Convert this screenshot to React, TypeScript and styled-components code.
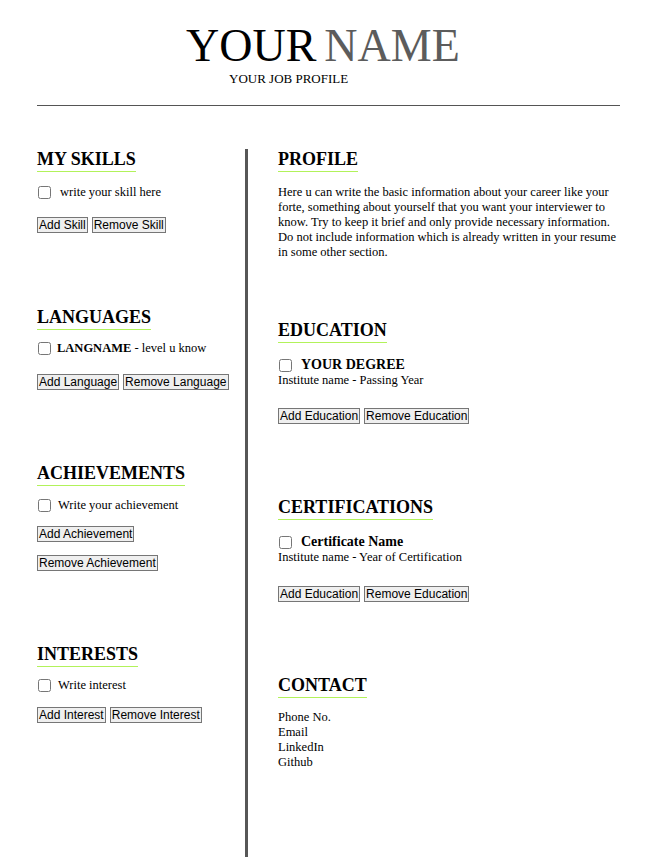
import styled, { createGlobalStyle } from 'styled-components';

const GlobalStyle = createGlobalStyle`
  html, body {
    margin: 0;
    padding: 0;
    background: #ffffff;
  }
  body {
    font-family: "Liberation Serif", "Times New Roman", serif;
    color: #000;
  }
`;

function App() {
  return (
    <>
      <GlobalStyle />
      <Page>
        <Header>
          <NameBlock>
            <Name>
              YOUR<NameGrey>NAME</NameGrey>
            </Name>
            <JobProfile>YOUR JOB PROFILE</JobProfile>
          </NameBlock>
        </Header>
        <Rule />

        <Columns>
          <LeftColumn>
            <Section $mt={0}>
              <Heading>MY SKILLS</Heading>
              <CheckRow $mt={13} $gap={9}>
                <Check type="checkbox" />
                <span>write your skill here</span>
              </CheckRow>
              <ButtonRow $mt={17}>
                <Button>Add Skill</Button>
                <Button>Remove Skill</Button>
              </ButtonRow>
            </Section>

            <Section $mt={74}>
              <Heading>LANGUAGES</Heading>
              <CheckRow $mt={11} $gap={6}>
                <Check type="checkbox" />
                <span>
                  <b>LANGNAME</b> - level u know
                </span>
              </CheckRow>
              <ButtonRow $mt={18}>
                <Button>Add Language</Button>
                <Button>Remove Language</Button>
              </ButtonRow>
            </Section>

            <Section $mt={73}>
              <Heading>ACHIEVEMENTS</Heading>
              <CheckRow $mt={12} $gap={7}>
                <Check type="checkbox" />
                <span>Write your achievement</span>
              </CheckRow>
              <ButtonRow $mt={13}>
                <Button>Add Achievement</Button>
                <Button>Remove Achievement</Button>
              </ButtonRow>
            </Section>

            <Section $mt={73}>
              <Heading>INTERESTS</Heading>
              <CheckRow $mt={11} $gap={7}>
                <Check type="checkbox" />
                <span>Write interest</span>
              </CheckRow>
              <ButtonRow $mt={14}>
                <Button>Add Interest</Button>
                <Button>Remove Interest</Button>
              </ButtonRow>
            </Section>
          </LeftColumn>

          <RightColumn>
            <Section $mt={0}>
              <Heading>PROFILE</Heading>
              <Paragraph>
                Here u can write the basic information about your career like your forte,
                something about yourself that you want your interviewer to know. Try to keep
                it brief and only provide necessary information. Do not include information
                which is already written in your resume in some other section.
              </Paragraph>
            </Section>

            <Section $mt={60}>
              <Heading>EDUCATION</Heading>
              <ItemTitle $mt={14}>
                <Check type="checkbox" />
                <span>YOUR DEGREE</span>
              </ItemTitle>
              <TextLine>Institute name - Passing Year</TextLine>
              <ButtonRow $mt={20}>
                <Button>Add Education</Button>
                <Button>Remove Education</Button>
              </ButtonRow>
            </Section>

            <Section $mt={73}>
              <Heading>CERTIFICATIONS</Heading>
              <ItemTitle $mt={14}>
                <Check type="checkbox" />
                <span>Certificate Name</span>
              </ItemTitle>
              <TextLine>Institute name - Year of Certification</TextLine>
              <ButtonRow $mt={21}>
                <Button>Add Education</Button>
                <Button>Remove Education</Button>
              </ButtonRow>
            </Section>

            <Section $mt={73}>
              <Heading>CONTACT</Heading>
              <ContactList>
                <TextLine>Phone No.</TextLine>
                <TextLine>Email</TextLine>
                <TextLine>LinkedIn</TextLine>
                <TextLine>Github</TextLine>
              </ContactList>
            </Section>
          </RightColumn>
        </Columns>
      </Page>
    </>
  );
}

//Styling
const Page = styled.div`
  width: 583px;
  padding: 0 0 0 37px;
`;

const Header = styled.header`
  padding-top: 22px;
  display: flex;
  padding-left: 149px;
`;

const NameBlock = styled.div`
  display: flex;
  flex-direction: column;
`;

const Name = styled.h1`
  margin: 0;
  font-size: 46px;
  line-height: 48px;
  font-weight: normal;
  white-space: nowrap;
`;

const NameGrey = styled.span`
  color: #5c5c5c;
  margin-left: 8px;
`;

const JobProfile = styled.div`
  margin: 1px 0 0 43px;
  font-size: 13px;
  line-height: 15px;
`;

const Rule = styled.hr`
  margin: 19px 0 0;
  border: none;
  border-top: 1px solid #555555;
  height: 0;
`;

const Columns = styled.div`
  margin-top: 43px;
  display: flex;
  min-height: 708px;
`;

const LeftColumn = styled.div`
  width: 208px;
  flex-shrink: 0;
`;

const RightColumn = styled.div`
  flex: 1;
  border-left: 3px solid #575757;
  padding-left: 30px;
`;

const Section = styled.section<{ $mt: number }>`
  margin-top: ${(p) => p.$mt}px;
`;

const Heading = styled.h2`
  display: inline-block;
  margin: 0;
  font-size: 18px;
  line-height: 21px;
  font-weight: bold;
  padding-bottom: 1px;
  border-bottom: 1px solid #b2f25a;
`;

const CheckRow = styled.label<{ $mt: number; $gap: number }>`
  display: flex;
  align-items: center;
  gap: ${(p) => p.$gap}px;
  margin-top: ${(p) => p.$mt}px;
  padding-left: 1px;
  font-size: 12.5px;
  line-height: 15px;
`;

const Check = styled.input`
  margin: 0;
  width: 13px;
  height: 13px;
`;

const ItemTitle = styled.label<{ $mt: number }>`
  display: flex;
  align-items: center;
  gap: 9px;
  margin-top: ${(p) => p.$mt}px;
  padding-left: 1px;
  font-size: 14px;
  line-height: 16px;
  font-weight: bold;
`;

const TextLine = styled.div`
  font-size: 12.5px;
  line-height: 15px;
`;

const ContactList = styled.div`
  margin-top: 12px;
`;

const Paragraph = styled.p`
  margin: 13px 0 0;
  font-size: 12.5px;
  line-height: 15px;
`;

const ButtonRow = styled.div<{ $mt: number }>`
  display: flex;
  flex-wrap: wrap;
  column-gap: 4px;
  row-gap: 13px;
  margin-top: ${(p) => p.$mt}px;
`;

const Button = styled.button`
  font-family: "Liberation Sans", Arial, sans-serif;
  font-size: 12px;
  line-height: 14px;
  color: #000;
  background: #efefef;
  border: 1px solid #767676;
  border-radius: 0;
  padding: 0 1px;
  margin: 0;
  cursor: pointer;

  &:hover {
    background: #e5e5e5;
  }
`;

export default App;
